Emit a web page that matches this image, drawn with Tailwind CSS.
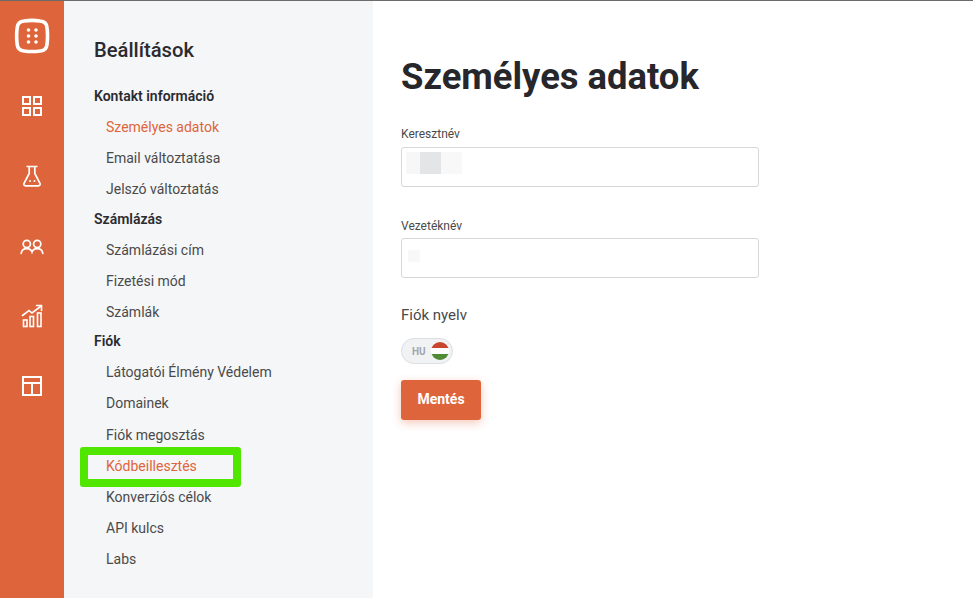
<!DOCTYPE html>
<html lang="hu">
<head>
  <meta charset="UTF-8">
  <title>Személyes adatok</title>
  <script src="https://cdn.jsdelivr.net/npm/@tailwindcss/browser@4"></script>
</head>
<body class="bg-white font-['Roboto',sans-serif]">
  <div class="h-[598px] w-[973px] overflow-hidden flex flex-col">
    <div class="h-px bg-[#6b6b6b] shrink-0"></div>
    <div class="flex flex-1 min-h-0">
      <!-- Icon rail -->
      <nav class="w-16 shrink-0 bg-[#de653b] flex flex-col items-center text-white">
        <svg class="mt-[17px]" width="36" height="36" viewBox="0 0 36 36" fill="none">
          <path d="M10 3C15 2.2 21 2.2 26 3C30.3 3.3 32.7 5.5 33 9.5C33.7 15 33.7 21 33 26.5C32.6 30.3 30.3 32.6 26.5 33C21 33.7 15 33.7 10 33C5.8 32.6 3.6 30.3 3.2 26.5C2.5 21 2.5 15 3.2 9.5C3.6 5.5 5.8 3.4 10 3Z" stroke="white" stroke-width="3.6"/>
          <g fill="white"><circle cx="14.5" cy="12" r="1.8"/><circle cx="22" cy="12" r="1.8"/><circle cx="14.5" cy="18" r="1.8"/><circle cx="22" cy="18" r="1.8"/><circle cx="14.5" cy="24" r="1.8"/><circle cx="22" cy="24" r="1.8"/></g>
        </svg>
        <svg class="mt-[41px]" width="22" height="22" viewBox="0 0 22 22" fill="none" stroke="white" stroke-width="2">
          <rect x="2" y="2" width="7" height="7"/><rect x="13" y="2" width="7" height="7"/><rect x="2" y="13" width="7" height="7"/><rect x="13" y="13" width="7" height="7"/>
        </svg>
        <svg class="mt-[47px]" width="22" height="24" viewBox="0 0 22 24" fill="none" stroke="white" stroke-width="1.7" stroke-linejoin="round">
          <path d="M5.5 2.5H16.5M8.2 2.5V9.5L3 19.3C2.4 20.7 3.2 21.8 4.7 21.8H17.3C18.8 21.8 19.6 20.7 19 19.3L13.8 9.5V2.5"/>
          <circle cx="9" cy="17" r="1" fill="white" stroke="none"/><circle cx="13.5" cy="17" r="1" fill="white" stroke="none"/>
        </svg>
        <svg class="mt-[50px]" width="24" height="18" viewBox="0 0 24 18" fill="none" stroke="white" stroke-width="1.7" stroke-linecap="round">
          <circle cx="6.8" cy="6" r="3.6"/><circle cx="17.2" cy="6" r="3.6"/>
          <path d="M1.2 15.5C1.5 12.3 4 10.6 6.8 10.6C9.3 10.6 11.2 11.7 12 14C12.8 11.7 14.7 10.6 17.2 10.6C20 10.6 22.5 12.3 22.8 15.5"/>
        </svg>
        <svg class="mt-[48px]" width="22" height="24" viewBox="0 0 22 24" fill="none" stroke="white" stroke-width="1.6">
          <path d="M1.5 11.5L8 6.5L11 9L19.5 2.5" stroke-linecap="round"/><path d="M15.5 1.5H20.5V6.5" stroke-linecap="round"/>
          <rect x="2.5" y="16" width="3.5" height="6.5"/><rect x="9" y="12.5" width="3.5" height="10"/><rect x="16.5" y="9" width="3.5" height="13.5"/>
        </svg>
        <svg class="mt-[47px]" width="22" height="22" viewBox="0 0 22 22" fill="none" stroke="white" stroke-width="2">
          <rect x="2" y="2" width="18" height="18"/><path d="M2 8H20M11 8V20"/>
        </svg>
      </nav>

      <!-- Settings menu -->
      <aside class="w-[309px] shrink-0 bg-[#f5f6f8] pl-[30px] text-[14px] text-[#4a4a4a]">
        <h2 class="mt-[36px] h-[27px] leading-[27px] text-[20.2px] font-medium text-[#2b2b2f]">Beállítások</h2>
        <div class="mt-[17px] h-[31px] leading-[31px] font-semibold text-[#2b2b2f]">Kontakt információ</div>
        <a class="block pl-3 h-[31px] leading-[31px] text-[#de653b]">Személyes adatok</a>
        <a class="block pl-3 h-[31px] leading-[31px]">Email változtatása</a>
        <a class="block pl-3 h-[30px] leading-[31px]">Jelszó változtatás</a>
        <div class="h-[31px] leading-[31px] font-semibold text-[#2b2b2f]">Számlázás</div>
        <a class="block pl-3 h-[31px] leading-[31px]">Számlázási cím</a>
        <a class="block pl-3 h-[31px] leading-[31px]">Fizetési mód</a>
        <a class="block pl-3 h-[29px] leading-[31px]">Számlák</a>
        <div class="h-[31px] leading-[31px] font-semibold text-[#2b2b2f]">Fiók</div>
        <a class="block pl-3 h-[31px] leading-[31px]">Látogatói Élmény Védelem</a>
        <a class="block pl-3 h-[32px] leading-[31px]">Domainek</a>
        <a class="block pl-3 h-[31px] leading-[31px]">Fiók megosztás</a>
        <a class="relative block pl-3 h-[31px] leading-[31px] text-[#de653b]">
          Kódbeillesztés
          <span class="absolute left-[-14px] top-[-4px] w-[161px] h-[40px] rounded-[3px] border-[8px] border-[#50e600]"></span>
        </a>
        <a class="block pl-3 h-[31px] leading-[31px]">Konverziós célok</a>
        <a class="block pl-3 h-[31px] leading-[31px]">API kulcs</a>
        <a class="block pl-3 h-[31px] leading-[31px]">Labs</a>
      </aside>

      <!-- Form -->
      <main class="flex-1 pl-7">
        <h1 class="mt-[53px] h-[46px] leading-[46px] text-[36.4px] font-bold text-[#26262b]">Személyes adatok</h1>
        <label class="block mt-[26px] h-[16px] leading-[16px] text-[12px] text-[#4a4a4a]">Keresztnév</label>
        <div class="mt-[5px] w-[358px] h-10 rounded-[3px] border border-[#d5d7da] pl-[4px] pt-1">
          <div class="flex w-[56px] h-[22px]">
            <div class="w-[14px] bg-[#f7f7f7]"></div>
            <div class="w-[21px] bg-[#e4e5e6]"></div>
            <div class="w-[21px] bg-[#f8f8f8]"></div>
          </div>
        </div>
        <label class="block mt-[31px] h-[16px] leading-[16px] text-[12px] text-[#4a4a4a]">Vezetéknév</label>
        <div class="mt-[4px] w-[358px] h-10 rounded-[3px] border border-[#d5d7da] pl-[6px] pt-[11px]">
          <div class="w-3 h-3 bg-[#f8f8f8]"></div>
        </div>
        <div class="mt-[28px] h-[19px] leading-[19px] text-[15px] text-[#4a4a4a]">Fiók nyelv</div>
        <div class="mt-[13px] w-[52px] h-[26px] rounded-full border border-[#dcdee2] bg-[#f1f2f4] flex items-center pl-[10px] gap-[5px]">
          <span class="text-[10px] font-bold text-[#a3a5aa]">HU</span>
          <span class="w-[18px] h-[18px] rounded-full overflow-hidden flex flex-col shrink-0">
            <span class="h-[6px] bg-[#c9452f]"></span>
            <span class="h-[6px] bg-white"></span>
            <span class="h-[6px] bg-[#4f8a34]"></span>
          </span>
        </div>
        <button class="mt-[16px] w-20 h-10 pb-[2px] rounded-[3px] bg-[#de653b] text-white text-[14px] font-bold shadow-[0_3px_10px_rgba(223,100,58,0.35)]">Mentés</button>
      </main>
    </div>
  </div>
</body>
</html>
